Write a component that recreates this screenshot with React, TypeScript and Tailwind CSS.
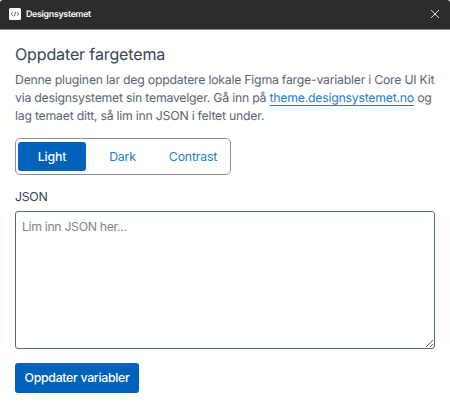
export default function App() {
  return (
    <div className="h-[409px] w-[450px] overflow-hidden bg-white font-['Inter',sans-serif] text-[#35455a] [text-rendering:geometricPrecision]">
      <header className="flex h-[30px] items-center rounded-t-[3px] border-b border-[#8b8789] bg-[#2c2c2c] pr-[11px] pb-px pl-[9px] text-white">
        <svg width="12" height="12" viewBox="0 0 12 12" fill="none">
          <rect width="12" height="12" rx="1.5" fill="white" />
          <path d="M4 4.2 2.2 6 4 7.8M8 4.2 9.8 6 8 7.8M6.7 3.7 5.3 8.3" stroke="#444" strokeWidth="0.8" />
        </svg>
        <span className="ml-[5px] flex-1 pt-[2px] text-[8.8px] leading-none font-semibold tracking-[-0.28px]">Designsystemet</span>
        <svg width="8" height="8" viewBox="0 0 8 8" stroke="#dddddd" strokeWidth="1">
          <path d="m0 0 8 8M8 0 0 8" />
        </svg>
      </header>
      <main className="flex flex-col items-start px-[15px] pt-[14px]">
        <h1 className="text-[16px] leading-[21px] font-normal tracking-[-0.13px] whitespace-nowrap">Oppdater fargetema</h1>
        <p className="mt-[6px] text-[12.3px] leading-[18px] tracking-[-0.24px] whitespace-nowrap text-[#5b6675]">
          Denne pluginen lar deg oppdatere lokale Figma farge-variabler i Core UI Kit<br />
          via designsystemet sin temavelger. Gå inn på <a className="text-[#2380d0] underline decoration-1 underline-offset-[3px] [text-decoration-skip-ink:none]">theme.designsystemet.no</a> og<br />
          lag temaet ditt, så lim inn JSON i feltet under.
        </p>
        <div className="mt-[13px] flex h-[37px] w-[216px] rounded-[5px] border border-[#8791a0] py-[3px] pr-[3px] pl-[2px] text-[12.3px] tracking-[-0.18px] text-[#2380d0]">
          <button className="w-[68px] rounded-[3px] bg-[#0062ba] pt-px font-medium text-white">Light</button>
          <button className="w-[73px] pt-px">Dark</button>
          <button className="w-[68px] pt-px">Contrast</button>
        </div>
        <label className="mt-[13px] text-[12.3px] leading-[18px] tracking-[-0.3px]">JSON</label>
        <textarea placeholder="Lim inn JSON her..." className="mt-[5px] h-[138px] w-[420px] rounded-[3px] border border-[#4f6d8e] px-[6px] py-[6px] text-[12.3px] leading-[18px] tracking-[-0.34px] placeholder:text-[#858585]" />
        <button className="mt-[14px] h-[30px] w-[124px] rounded-[3px] bg-[#0062ba] pt-px text-[12.3px] font-medium tracking-[-0.3px] whitespace-nowrap text-white">Oppdater variabler</button>
      </main>
    </div>
  );
}
